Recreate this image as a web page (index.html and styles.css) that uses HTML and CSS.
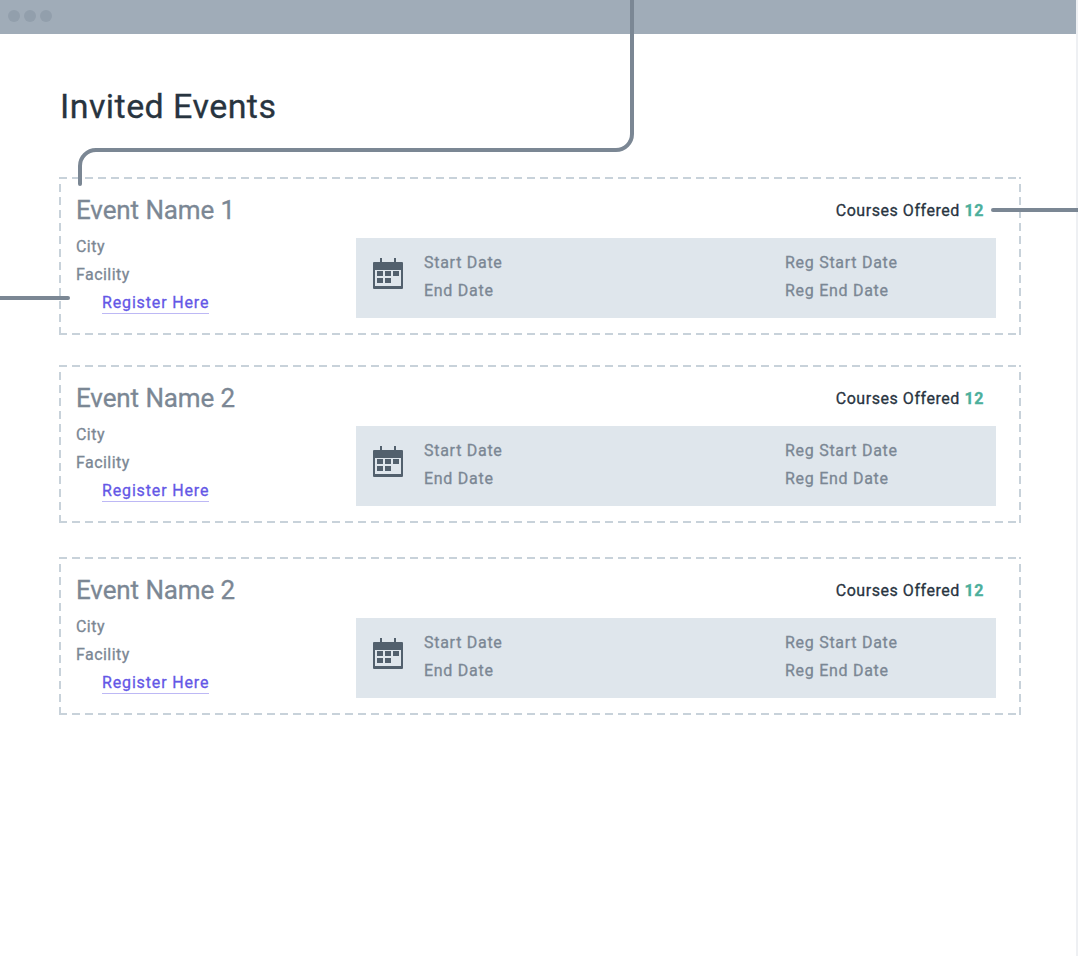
FILE: index.html
```html
<!DOCTYPE html>
<html lang="en">
<head>
<meta charset="utf-8">
<title>Invited Events</title>
<link rel="stylesheet" href="styles.css">
</head>
<body>
<div class="window">
  <header class="titlebar">
    <span class="dot"></span><span class="dot"></span><span class="dot"></span>
  </header>
  <main class="content">
    <h1 class="page-title">Invited Events</h1>
    <section class="events">
      <article class="card">
        <div class="card-head">
          <h2 class="event-name">Event Name 1</h2>
          <p class="courses">Courses Offered <b class="count">12</b></p>
        </div>
        <div class="card-body">
          <div class="place">
            <div class="place-line">City</div>
            <div class="place-line">Facility</div>
            <a class="register" href="#">Register Here</a>
          </div>
          <div class="dates">
            <svg class="cal" width="30" height="31" viewBox="0 0 30 31"><path class="cal-fill" d="M7 0h2v4H7zM21 0h2v4h-2zM1 4h28a1 1 0 0 1 1 1v25a1 1 0 0 1-1 1H1a1 1 0 0 1-1-1V5a1 1 0 0 1 1-1zM2 12v16h26V12zM4 13h6v5H4zM12 13h6v5h-6zM20 13h6v5h-6zM4 20h6v5H4zM12 20h6v5h-6z" fill-rule="evenodd"/></svg>
            <div class="date-col date-col-main"><div>Start Date</div><div>End Date</div></div>
            <div class="date-col"><div>Reg Start Date</div><div>Reg End Date</div></div>
          </div>
        </div>
      </article>
      <article class="card">
        <div class="card-head">
          <h2 class="event-name">Event Name 2</h2>
          <p class="courses">Courses Offered <b class="count">12</b></p>
        </div>
        <div class="card-body">
          <div class="place">
            <div class="place-line">City</div>
            <div class="place-line">Facility</div>
            <a class="register" href="#">Register Here</a>
          </div>
          <div class="dates">
            <svg class="cal" width="30" height="31" viewBox="0 0 30 31"><path class="cal-fill" d="M7 0h2v4H7zM21 0h2v4h-2zM1 4h28a1 1 0 0 1 1 1v25a1 1 0 0 1-1 1H1a1 1 0 0 1-1-1V5a1 1 0 0 1 1-1zM2 12v16h26V12zM4 13h6v5H4zM12 13h6v5h-6zM20 13h6v5h-6zM4 20h6v5H4zM12 20h6v5h-6z" fill-rule="evenodd"/></svg>
            <div class="date-col date-col-main"><div>Start Date</div><div>End Date</div></div>
            <div class="date-col"><div>Reg Start Date</div><div>Reg End Date</div></div>
          </div>
        </div>
      </article>
      <article class="card card-last">
        <div class="card-head">
          <h2 class="event-name">Event Name 2</h2>
          <p class="courses">Courses Offered <b class="count">12</b></p>
        </div>
        <div class="card-body">
          <div class="place">
            <div class="place-line">City</div>
            <div class="place-line">Facility</div>
            <a class="register" href="#">Register Here</a>
          </div>
          <div class="dates">
            <svg class="cal" width="30" height="31" viewBox="0 0 30 31"><path class="cal-fill" d="M7 0h2v4H7zM21 0h2v4h-2zM1 4h28a1 1 0 0 1 1 1v25a1 1 0 0 1-1 1H1a1 1 0 0 1-1-1V5a1 1 0 0 1 1-1zM2 12v16h26V12zM4 13h6v5H4zM12 13h6v5h-6zM20 13h6v5h-6zM4 20h6v5H4zM12 20h6v5h-6z" fill-rule="evenodd"/></svg>
            <div class="date-col date-col-main"><div>Start Date</div><div>End Date</div></div>
            <div class="date-col"><div>Reg Start Date</div><div>Reg End Date</div></div>
          </div>
        </div>
      </article>
    </section>
  </main>
  <svg class="connectors" width="1078" height="340" viewBox="0 0 1078 340">
    <path d="M632 0V134a16 16 0 0 1-16 16H96a16 16 0 0 0-16 16V184" />
    <path d="M993 210H1078" />
    <path d="M0 298H68" />
  </svg>
</div>
</body>
</html>
```

FILE: styles.css
```css
* { box-sizing: border-box; }
html, body { margin: 0; padding: 0; background: #fff; }
body {
  font-family: Roboto, "Noto Sans", sans-serif;
  color: #7b8794;
  height: 956px;
  overflow: hidden;
  -webkit-text-stroke: 0.3px currentColor;
}
.window {
  position: relative;
  width: 1078px;
  height: 956px;
  border-right: 2px solid #eef0f3;
}
.titlebar {
  height: 34px;
  background: #a0acb8;
  display: flex;
  align-items: center;
  gap: 4px;
  padding: 0 8px 2px;
}
.dot {
  width: 12px;
  height: 12px;
  border-radius: 50%;
  background: #929fac;
}
.content { padding: 0 55px 0 59px; }
.page-title {
  margin: 50px 0 0;
  padding-left: 1px;
  font-size: 34px;
  line-height: 44px;
  font-weight: 400;
  color: #28343f;
  letter-spacing: 0.45px;
}
.events {
  margin-top: 49px;
  display: flex;
  flex-direction: column;
  gap: 30px;
}
.card {
  height: 158px;
  padding: 16px 25px 0 17px;
  --dash: #c8d2da;
  background:
    repeating-linear-gradient(90deg, var(--dash) 0 8px, transparent 8px 13px) left top / 100% 2px no-repeat,
    repeating-linear-gradient(90deg, var(--dash) 0 8px, transparent 8px 13px) left bottom / 100% 2px no-repeat,
    repeating-linear-gradient(0deg, var(--dash) 0 8px, transparent 8px 13px) left top / 2px 100% no-repeat,
    repeating-linear-gradient(0deg, var(--dash) 0 8px, transparent 8px 13px) right top / 2px 100% no-repeat;
}
.card-last { margin-top: 4px; }
.card-head {
  display: flex;
  justify-content: space-between;
  align-items: center;
  height: 36px;
  padding-right: 12px;
}
.event-name {
  margin: 0;
  padding-bottom: 2px;
  font-size: 26px;
  font-weight: 400;
  line-height: 34px;
  letter-spacing: -0.1px;
  color: #7b8794;
}
.courses {
  margin: 0;
  font-size: 16px;
  font-weight: 400;
  line-height: 24px;
  letter-spacing: 0.55px;
  color: #28343f;
}
.count { color: #4caf9c; font-weight: 700; letter-spacing: 0.6px; }
.card-body {
  display: flex;
  align-items: flex-start;
}
.place {
  width: 280px;
  flex: none;
  font-size: 16px;
  font-weight: 400;
  line-height: 28px;
  letter-spacing: 0.45px;
  padding-top: 4px;
}
.register {
  display: inline-block;
  margin-left: 26px;
  line-height: 21px;
  letter-spacing: 0.85px;
  color: #6457e6;
  text-decoration: none;
  border-bottom: 1px solid #bdb8f5;
}
.dates {
  flex: 1;
  height: 80px;
  margin-top: 9px;
  background: #dfe6ec;
  display: flex;
  align-items: center;
  padding: 0 0 2px 17px;
  font-size: 16px;
  line-height: 28px;
  font-weight: 400;
  letter-spacing: 0.72px;
}
.cal { flex: none; margin-bottom: 7px; }
.cal-fill { fill: #52606d; }
.date-col-main { width: 361px; margin-left: 21px; }
.connectors {
  position: absolute;
  left: 0;
  top: 0;
  pointer-events: none;
}
.connectors path {
  fill: none;
  stroke: #7b8794;
  stroke-width: 4;
  stroke-linecap: round;
}
```
